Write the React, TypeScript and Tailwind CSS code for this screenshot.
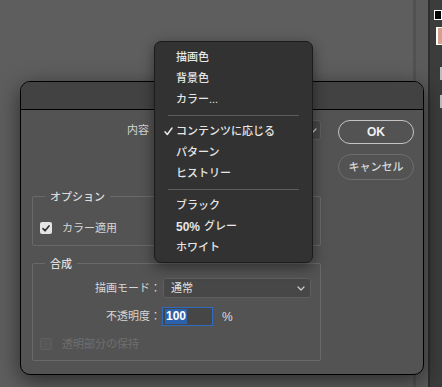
import React from "react";

const FONT = "font-['Liberation_Sans','Noto_Sans_CJK_JP',sans-serif]";

function Chevron({ className }: { className?: string }) {
  return (
    <svg className={className} width="8" height="5" viewBox="0 0 8 5" fill="none">
      <path d="M1 1l3 3 3-3" stroke="#cfcfcf" strokeWidth="1.2" strokeLinecap="round" strokeLinejoin="round" />
    </svg>
  );
}

function MenuItem({ label, checked, latin }: { label: string; checked?: boolean; latin?: string }) {
  return (
    <div className="relative flex h-[21px] items-center pl-[21px] text-[11px] font-medium text-[#e6e6e6]">
      {checked && (
        <svg className="absolute left-[9px] top-[6px]" width="9" height="9" viewBox="0 0 9 9" fill="none">
          <path d="M1 4.8l2.3 2.7L8 1" stroke="#e6e6e6" strokeWidth="1.5" strokeLinecap="round" strokeLinejoin="round" />
        </svg>
      )}
      {latin && <span className="mr-[4px] text-[12px] font-bold">{latin}</span>}
      <span>{label}</span>
    </div>
  );
}

function Sep() {
  return <div className="mx-[13px] my-[5px] h-px bg-[#5c5c5c]" />;
}

export default function App() {
  return (
    <div className={`relative h-[387px] w-[442px] overflow-hidden ${FONT}`}>
      {/* desktop backdrop */}
      <div className="flex h-full w-full">
        <div className="h-full w-[413px] bg-[#5e5e5e]" />
        <div className="h-full w-[3px] bg-[#515151]" />
        <div className="h-full w-[12px] bg-[#5b5b5b]" />
        <div className="h-full w-[2px] bg-[#2e2e2e]" />
        <div className="flex h-full flex-1 flex-col items-end bg-[#3c3c3c]">
          <div className="mt-[10px] h-[10px] w-[8px] border border-white bg-black" />
          <div className="mt-[7px] h-[18px] w-[6px] border-l-2 border-y border-white bg-[#d4a090]" />
          <div className="mt-[22px] h-[13px] w-[2px] bg-[#bdbdbd]" />
          <div className="mt-[15px] h-[13px] w-[2px] bg-[#bdbdbd]" />
        </div>
      </div>

      {/* dialog window */}
      <div className="absolute left-[20px] top-[81px] flex h-[294px] w-[404px] flex-col overflow-hidden rounded-[10px] border border-black bg-[#535353] shadow-[0_6px_22px_rgba(0,0,0,0.55)]">
        <div className="h-[28px] shrink-0 border-b border-black bg-[#424242]" />
        <div className="flex flex-1 pl-[11px] pr-[9px] pt-[10px]">
          {/* left column */}
          <div className="flex w-[289px] flex-col">
            <div className="flex h-[20px] items-center">
              <div className="w-[118px] pr-[1px] text-right text-[11px] text-[#d6d6d6]">内容</div>
              <div className="ml-[4px] flex h-[20px] flex-1 items-center justify-end rounded-[3px] border border-[#5e5e5e] bg-[#474747] pr-[3px]">
                <Chevron />
              </div>
            </div>

            {/* オプション */}
            <div className="relative mt-[56px] rounded-[2px] border border-[#696969] pb-[10px] pl-[7px] pt-[24px]">
              <span className="absolute -top-[7px] left-[12px] bg-[#535353] px-[5px] text-[11px] font-medium leading-[14px] text-[#dcdcdc]">
                オプション
              </span>
              <div className="flex h-[14px] items-center">
                <div className="flex h-[12px] w-[12px] items-center justify-center rounded-[2px] bg-[#e4e4e4]">
                  <svg width="8" height="7" viewBox="0 0 8 7" fill="none">
                    <path d="M1 3.6l2 2.2L7 1" stroke="#333" strokeWidth="1.7" strokeLinecap="round" strokeLinejoin="round" />
                  </svg>
                </div>
                <span className="ml-[10px] text-[11px] text-[#d6d6d6]">カラー適用</span>
              </div>
            </div>

            {/* 合成 */}
            <div className="relative mt-[17px] rounded-[2px] border border-[#696969] pb-[9px] pt-[14px]">
              <span className="absolute -top-[7px] left-[12px] bg-[#535353] px-[5px] text-[11px] font-medium leading-[14px] text-[#dcdcdc]">
                合成
              </span>
              <div className="flex h-[20px] items-center">
                <div className="w-[128px] text-right text-[11px] text-[#d6d6d6]">描画モード：</div>
                <div className="ml-[2px] flex h-[20px] w-[148px] items-center justify-between rounded-[3px] border border-[#5f5f5f] bg-[#474747] pl-[7px] pr-[5px]">
                  <span className="text-[11px] text-[#e2e2e2]">通常</span>
                  <Chevron />
                </div>
              </div>
              <div className="mt-[9px] flex h-[19px] items-center">
                <div className="w-[128px] text-right text-[11px] text-[#d6d6d6]">不透明度：</div>
                <div className="ml-[1px] flex h-[19px] w-[51px] items-center border border-[#2f6cc0] bg-[#464646] pl-[2px]">
                  <span className="bg-[#2c62ab] px-[1px] text-[12px] font-bold leading-[15px] text-white">100</span>
                </div>
                <span className="ml-[9px] text-[12px] text-[#dddddd]">%</span>
              </div>
              <div className="mt-[11px] flex h-[14px] items-center pl-[7px]">
                <div className="h-[12px] w-[12px] rounded-[2px] border border-[#5f5f5f] bg-[#575757]" />
                <span className="ml-[10px] text-[11px] text-[#6f6f6f]">透明部分の保持</span>
              </div>
            </div>
          </div>

          {/* buttons */}
          <div className="ml-auto flex w-[76px] flex-col gap-[10px]">
            <div className="flex h-[24px] items-center justify-center rounded-full border-[1.5px] border-[#c4c4c4] text-[12px] font-bold text-[#f0f0f0]">
              OK
            </div>
            <div className="flex h-[26px] items-center justify-center rounded-full border-[1.5px] border-[#6e6e6e] text-[11px] font-medium text-[#d8d8d8]">
              キャンセル
            </div>
          </div>
        </div>
      </div>

      {/* dropdown menu */}
      <div className="absolute left-[154px] top-[41px] w-[159px] rounded-[7px] border border-[#1c1c1c] bg-[#323232] pb-[4px] pt-[5px] shadow-[0_4px_14px_rgba(0,0,0,0.45)]">
        <MenuItem label="描画色" />
        <MenuItem label="背景色" />
        <MenuItem label="カラー..." />
        <Sep />
        <MenuItem label="コンテンツに応じる" checked />
        <MenuItem label="パターン" />
        <MenuItem label="ヒストリー" />
        <Sep />
        <MenuItem label="ブラック" />
        <MenuItem latin="50%" label="グレー" />
        <MenuItem label="ホワイト" />
      </div>
    </div>
  );
}
